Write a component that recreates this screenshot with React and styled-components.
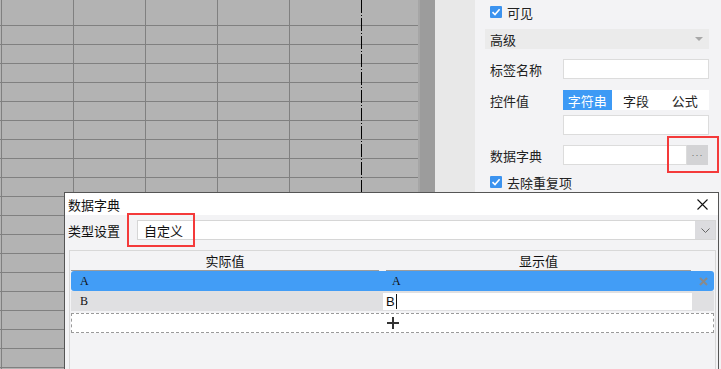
import React from "react";
import styled, { createGlobalStyle } from "styled-components";

const GlobalStyle = createGlobalStyle`
  html, body {
    margin: 0;
    padding: 0;
  }
  body {
    font-family: "Noto Sans CJK SC", "Liberation Sans", sans-serif;
    font-size: 13px;
    color: #333;
    background: #f3f3f5;
  }
`;

const Page = styled.div`
  position: relative;
  display: flex;
  width: 721px;
  height: 369px;
  overflow: hidden;
`;

// 表格画布
const Sheet = styled.div`
  display: flex;
  width: 418px;
  height: 100%;
  padding-left: 1px;
  box-sizing: border-box;
  background-color: #b3b3b3;
  background-image: repeating-linear-gradient(
    to bottom,
    transparent 0,
    transparent 18px,
    #808080 18px,
    #808080 19px
  );
  background-position: 0 7px;
`;

const SheetCol = styled.div`
  box-sizing: border-box;
  height: 100%;
  width: ${(p) => (p.$fill ? "auto" : "72px")};
  flex: ${(p) => (p.$fill ? "1" : "none")};
  border-left: ${(p) => (p.$dashed ? "none" : "1px solid #808080")};
  background-image: ${(p) =>
    p.$dashed
      ? "repeating-linear-gradient(to bottom, #000 0, #000 13px, transparent 13px, transparent 15px, #000 15px, #000 16px, transparent 16px, transparent 18px)"
      : "none"};
  background-size: 1px 100%;
  background-repeat: no-repeat;
`;

const DarkStrip = styled.div`
  width: 17px;
  height: 100%;
  background: linear-gradient(to right, #a6a6a6 0, #a6a6a6 2px, #9c9c9c 2px);
`;

const LightStrip = styled.div`
  width: 40px;
  height: 100%;
  background: #e8e8e8;
`;

// 右侧属性面板
const Panel = styled.div`
  flex: 1;
  display: flex;
  flex-direction: column;
  padding-left: 15px;
  padding-top: 2px;
  box-sizing: border-box;
  background: #f3f3f5;
`;

const CheckRow = styled.div`
  display: flex;
  align-items: center;
  gap: 5px;
  height: 20px;
  margin-top: ${(p) => p.$top || 0}px;
  color: #222;
`;

const CheckBox = styled.span`
  display: inline-flex;
  align-items: center;
  justify-content: center;
  width: 12px;
  height: 12px;
  background: #3c93ef;
  border-radius: 1px;
`;

const SectionBar = styled.div`
  display: flex;
  align-items: center;
  justify-content: space-between;
  margin-top: 7px;
  margin-left: -5px;
  width: 224px;
  height: 20px;
  padding: 0 6px 0 5px;
  box-sizing: border-box;
  background: #ebebeb;
  color: #222;
`;

const Caret = styled.span`
  width: 0;
  height: 0;
  border-left: 4px solid transparent;
  border-right: 4px solid transparent;
  border-top: 4px solid #a8a8a8;
`;

const FieldRow = styled.div`
  position: relative;
  display: flex;
  align-items: center;
  height: 20px;
  margin-top: ${(p) => p.$top || 0}px;
`;

const FieldLabel = styled.span`
  width: 73px;
  color: #222;
  flex: none;
`;

const TextBox = styled.div`
  width: ${(p) => p.$width || 146}px;
  height: 20px;
  box-sizing: border-box;
  background: #fff;
  border: 1px solid #dcdcdc;
  margin-left: ${(p) => p.$left || 0}px;
`;

const Segments = styled.div`
  display: flex;
  width: 146px;
  height: 20px;
  background: #fff;
`;

const Segment = styled.span`
  flex: 1;
  display: flex;
  align-items: center;
  justify-content: center;
  background: ${(p) => (p.$active ? "#3d9af5" : "#fff")};
  color: ${(p) => (p.$active ? "#fff" : "#222")};
`;

const DotsButton = styled.span`
  display: flex;
  align-items: center;
  justify-content: center;
  width: 21px;
  height: 20px;
  background: #d3d3d5;
  color: #6a6a6a;
  font-size: 9px;
  letter-spacing: 1px;
  font-family: "Liberation Sans", sans-serif;
`;

const RedFrame = styled.div`
  position: absolute;
  box-sizing: border-box;
  left: ${(p) => p.$left}px;
  top: ${(p) => p.$top}px;
  width: ${(p) => p.$w}px;
  height: ${(p) => p.$h}px;
  border: 2px solid #f43a3a;
  pointer-events: none;
`;

// 数据字典对话框
const Dialog = styled.div`
  position: absolute;
  left: 64px;
  top: 192px;
  width: 655px;
  height: 190px;
  box-sizing: border-box;
  border: 1px solid #555;
  background: #f3f3f5;
  display: flex;
  flex-direction: column;
`;

const TitleBar = styled.div`
  display: flex;
  align-items: center;
  justify-content: space-between;
  height: 22px;
  padding: 0 10px 0 3px;
  background: #fff;
  color: #111;
`;

const DialogBody = styled.div`
  display: flex;
  flex-direction: column;
  padding: 5px 2px 0 3px;
`;

const TypeRow = styled.div`
  display: flex;
  align-items: center;
  height: 20px;
  color: #111;
`;

const TypeLabel = styled.span`
  width: 69px;
  flex: none;
`;

const Select = styled.div`
  position: relative;
  flex: 1;
  display: flex;
  height: 20px;
  box-sizing: border-box;
  background: #fff;
  border: 1px solid #d6d6d6;
`;

const SelectText = styled.span`
  flex: 1;
  display: flex;
  align-items: center;
  padding-left: 6px;
  color: #111;
`;

const SelectArrow = styled.span`
  display: flex;
  align-items: center;
  justify-content: center;
  width: 20px;
  background: #dcdcdf;
`;

const Table = styled.div`
  margin: 10px 0 0 1px;
  padding: 0 1px;
  height: 130px;
  box-sizing: border-box;
  border: 1px solid #d8d8d8;
  display: flex;
  flex-direction: column;
`;

const HeadRow = styled.div`
  display: flex;
  height: 20px;
`;

const HeadCell = styled.div`
  width: ${(p) => p.$width}px;
  margin: ${(p) => p.$margin};
  display: flex;
  align-items: center;
  justify-content: center;
  box-sizing: border-box;
  border-bottom: 1px solid #9c9c9c;
  color: #111;
`;

const DataRow = styled.div`
  display: flex;
  align-items: center;
  height: 20px;
  background: ${(p) => (p.$selected ? "#429df6" : "#e0e0e2")};
  border-radius: ${(p) => (p.$selected ? "3px" : "0")};
`;

const Cell = styled.div`
  width: ${(p) => p.$width}px;
  flex: none;
  padding-left: 9px;
  box-sizing: border-box;
  font-family: "Liberation Serif", serif;
  font-size: 12px;
  color: #111;
`;

const CellInput = styled.div`
  width: 309px;
  height: 17px;
  flex: none;
  display: flex;
  align-items: center;
  padding-left: 3px;
  box-sizing: border-box;
  background: #fff;
  font-family: "Liberation Sans", sans-serif;
  font-size: 13px;
  color: #111;
`;

const Caret2 = styled.span`
  width: 1px;
  height: 15px;
  margin-left: 1px;
  background: #111;
`;

const ActionCell = styled.div`
  flex: 1;
  display: flex;
  align-items: center;
  justify-content: center;
`;

const AddRow = styled.div`
  display: flex;
  align-items: center;
  margin-top: 2px;
  height: 20px;
  padding-left: 315px;
  box-sizing: border-box;
  background: #fff;
  border: 1px dashed #9a9a9a;
`;

const Check = () => (
  <CheckBox>
    <svg width="10" height="10" viewBox="0 0 10 10">
      <path d="M1.5 5.2 L4 7.6 L8.6 2.2" fill="none" stroke="#fff" strokeWidth="1.6" />
    </svg>
  </CheckBox>
);

const App = () => {
  return (
    <Page>
      <GlobalStyle />
      <Sheet>
        <SheetCol />
        <SheetCol />
        <SheetCol />
        <SheetCol />
        <SheetCol />
        <SheetCol $dashed $fill />
      </Sheet>
      <DarkStrip />
      <LightStrip />

      <Panel>
        <CheckRow>
          <Check />
          <span>可见</span>
        </CheckRow>
        <SectionBar>
          <span>高级</span>
          <Caret />
        </SectionBar>
        <FieldRow $top={10}>
          <FieldLabel>标签名称</FieldLabel>
          <TextBox />
        </FieldRow>
        <FieldRow $top={11}>
          <FieldLabel>控件值</FieldLabel>
          <Segments>
            <Segment $active>字符串</Segment>
            <Segment>字段</Segment>
            <Segment>公式</Segment>
          </Segments>
        </FieldRow>
        <FieldRow $top={5}>
          <TextBox $left={73} />
        </FieldRow>
        <FieldRow $top={10}>
          <FieldLabel>数据字典</FieldLabel>
          <TextBox $width={124} />
          <DotsButton>···</DotsButton>
          <RedFrame $left={177} $top={-9} $w={52} $h={37} />
        </FieldRow>
        <CheckRow $top={7}>
          <Check />
          <span>去除重复项</span>
        </CheckRow>
      </Panel>

      <Dialog>
        <TitleBar>
          <span>数据字典</span>
          <svg width="11" height="11" viewBox="0 0 11 11">
            <path d="M0.5 0.5 L10.5 10.5 M10.5 0.5 L0.5 10.5" stroke="#111" strokeWidth="1.1" />
          </svg>
        </TitleBar>
        <DialogBody>
          <TypeRow>
            <TypeLabel>类型设置</TypeLabel>
            <Select>
              <SelectText>自定义</SelectText>
              <SelectArrow>
                <svg width="9" height="5" viewBox="0 0 9 5">
                  <path d="M0.5 0.5 L4.5 4.5 L8.5 0.5" fill="none" stroke="#666" strokeWidth="1" />
                </svg>
              </SelectArrow>
              <RedFrame $left={-11} $top={-8} $w={68} $h={34} />
            </Select>
          </TypeRow>
          <Table>
            <HeadRow>
              <HeadCell $width={308} $margin="0 4px 0 0">实际值</HeadCell>
              <HeadCell $width={305} $margin="0 0 0 3px">显示值</HeadCell>
            </HeadRow>
            <DataRow $selected>
              <Cell $width={312}>A</Cell>
              <Cell $width={309}>A</Cell>
              <ActionCell>
                <svg width="9" height="9" viewBox="0 0 9 9">
                  <path d="M1 1 L8 8 M8 1 L1 8" stroke="#8a8a8a" strokeWidth="2" />
                </svg>
              </ActionCell>
            </DataRow>
            <DataRow>
              <Cell $width={312}>B</Cell>
              <CellInput>
                B<Caret2 />
              </CellInput>
            </DataRow>
            <AddRow>
              <svg width="12" height="12" viewBox="0 0 12 12">
                <path d="M6 0 L6 12 M0 6 L12 6" stroke="#333" strokeWidth="2" />
              </svg>
            </AddRow>
          </Table>
        </DialogBody>
      </Dialog>
    </Page>
  );
};

export default App;
